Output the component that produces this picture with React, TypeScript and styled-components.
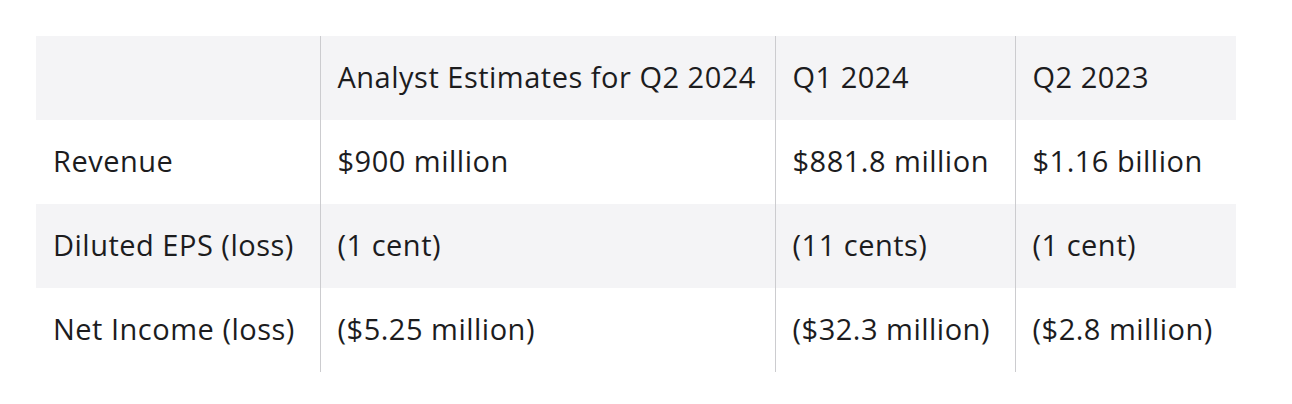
import React from "react";
import styled, { createGlobalStyle } from "styled-components";

const Global = createGlobalStyle`
  html, body { margin: 0; padding: 0; background: #ffffff; }
  body { font-family: "Open Sans", "Noto Sans", sans-serif; color: #1c1c1e; }
`;

const Page = styled.div`
  padding: 36px;
`;

const Table = styled.table`
  width: 1200px;
  border-collapse: collapse;
  table-layout: fixed;
  font-size: 29px;
  letter-spacing: 0.5px;
`;

const Row = styled.tr<{ $shaded: boolean }>`
  height: 84px;
  background: ${(p) => (p.$shaded ? "#f4f4f6" : "#ffffff")};
`;

const Cell = styled.td`
  padding: 0 17px 3px;
  vertical-align: middle;
  white-space: nowrap;
  font-weight: 400;
  text-align: left;
  & + & {
    border-left: 1px solid #cccccf;
  }
`;

const widths = [284, 455, 240, 221];

const rows: string[][] = [
  ["", "Analyst Estimates for Q2 2024", "Q1 2024", "Q2 2023"],
  ["Revenue", "$900 million", "$881.8 million", "$1.16 billion"],
  ["Diluted EPS (loss)", "(1 cent)", "(11 cents)", "(1 cent)"],
  ["Net Income (loss)", "($5.25 million)", "($32.3 million)", "($2.8 million)"],
];

export default function App() {
  return (
    <Page>
      <Global />
      <Table>
        <colgroup>
          {widths.map((w, i) => (
            <col key={i} style={{ width: w }} />
          ))}
        </colgroup>
        <tbody>
          {rows.map((r, i) => (
            <Row key={i} $shaded={i % 2 === 0}>
              {r.map((c, j) => (
                <Cell key={j}>{c}</Cell>
              ))}
            </Row>
          ))}
        </tbody>
      </Table>
    </Page>
  );
}
